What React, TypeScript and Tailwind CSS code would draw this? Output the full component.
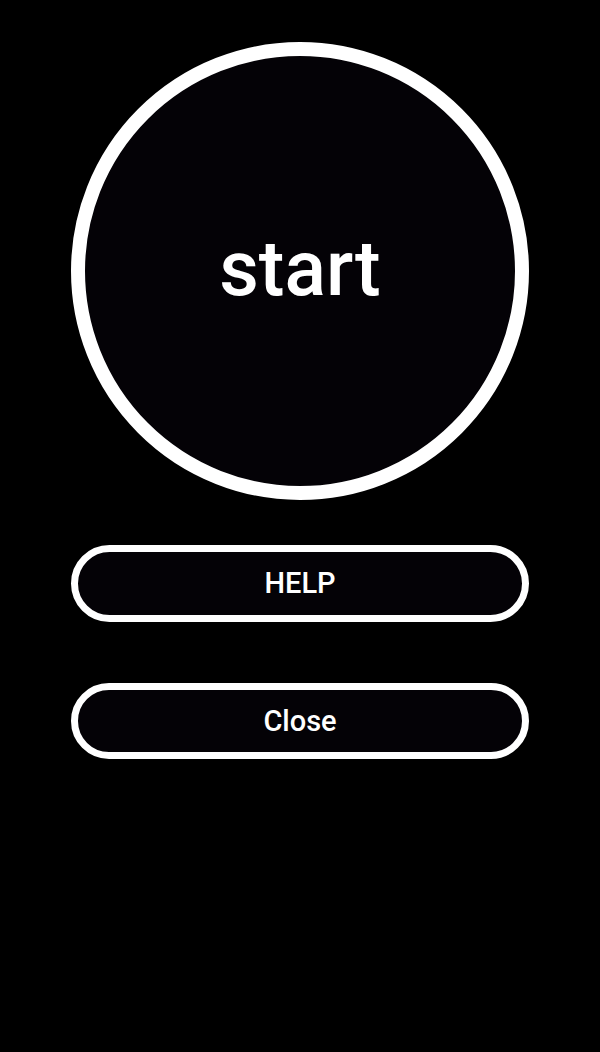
import React from "react";

function App() {
  return (
    <div className="min-h-[1052px] w-full bg-black flex flex-col items-center pt-[42px] font-['Roboto',sans-serif] text-white">
      <button className="w-[458px] h-[458px] rounded-full border-[14px] border-white bg-[#040206] flex items-center justify-center">
        <span className="text-[77px] font-medium leading-none pb-1">start</span>
      </button>

      <button className="mt-[45px] w-[458px] h-[77px] rounded-full border-[7px] border-white bg-[#040206] flex items-center justify-center text-[29px] font-medium leading-none">
        HELP
      </button>

      <button className="mt-[61px] w-[458px] h-[76px] rounded-full border-[7px] border-white bg-[#040206] flex items-center justify-center text-[29px] font-medium leading-none">
        Close
      </button>
    </div>
  );
}

export default App;
